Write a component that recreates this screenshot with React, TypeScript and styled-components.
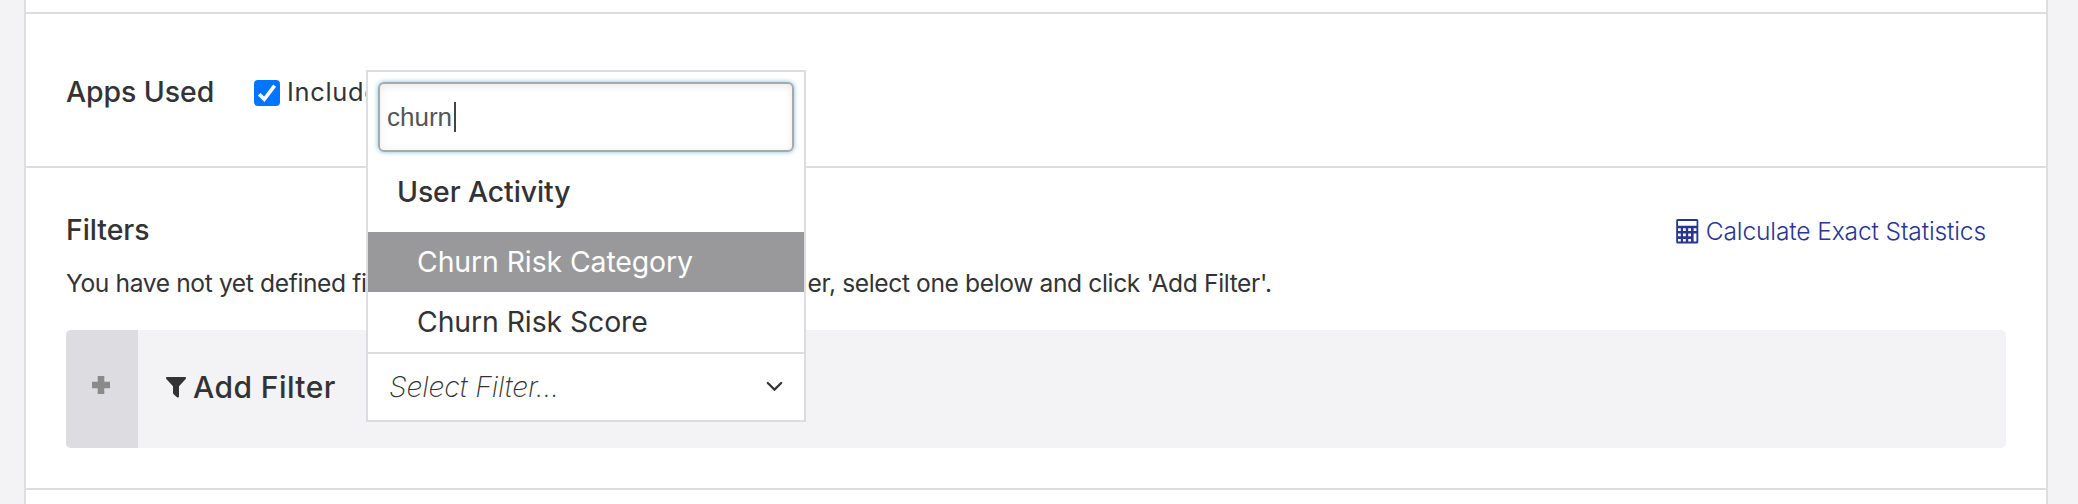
import React from 'react';
import styled, { createGlobalStyle, css } from 'styled-components';

const color = {
  page: '#f3f3f5',
  line: '#dddce1',
  text: '#333335',
  link: '#283593',
  active: '#99999b',
};

const GlobalStyle = createGlobalStyle`
  *, *::before, *::after { box-sizing: border-box; }
  html { overflow: hidden; }
  body {
    margin: 0;
    background: ${color.page};
    color: ${color.text};
    font-family: Inter, 'Liberation Sans', sans-serif;
  }
  svg { display: block; flex: none; }
`;

const Page = styled.main`
  height: 504px;
  padding: 0 30px 0 24px;
  overflow: hidden;
`;

const Panel = styled.div`
  display: flex;
  flex-direction: column;
  height: 100%;
  background: #fff;
  border: solid ${color.line};
  border-width: 0 2px;
`;

const PreviousSection = styled.section`
  flex: none;
  height: 14px;
  border-bottom: 2px solid ${color.line};
`;

const AppsSection = styled.section`
  display: flex;
  flex: none;
  align-items: center;
  height: 154px;
  padding: 4px 40px 0;
  border-bottom: 2px solid ${color.line};
`;

const FiltersSection = styled.section`
  flex: none;
  height: 322px;
  padding: 42px 40px 0;
  border-bottom: 2px solid ${color.line};
`;

const SectionTitle = styled.h2`
  margin: 0;
  font-size: 28.4px;
  font-weight: 500;
  line-height: 40px;
  letter-spacing: -0.05px;
  white-space: nowrap;
`;

const AppsTitle = styled(SectionTitle)`
  width: 188px;
`;

const CheckLabel = styled.div`
  display: flex;
  align-items: center;
  gap: 7px;
  font-size: 25.4px;
  line-height: 36px;
  letter-spacing: 0.7px;
  white-space: nowrap;
`;

const Checkbox = styled.span`
  display: block;
  width: 26px;
  height: 26px;
  margin-top: 1px;
  border-radius: 4px;
  background: #0075ff;
`;

const FiltersHeader = styled.div`
  display: flex;
  align-items: center;
  justify-content: space-between;
  height: 40px;
  padding-right: 20px;
`;

const StatsLink = styled.a`
  display: flex;
  align-items: center;
  gap: 7px;
  padding-top: 2px;
  color: ${color.link};
  font-size: 24.6px;
  font-weight: 260;
  line-height: 36px;
  letter-spacing: -0.14px;
`;

const Help = styled.p`
  display: flex;
  margin: 14px 0 28px;
  font-size: 24.6px;
  line-height: 38px;
  letter-spacing: -0.38px;
  white-space: pre;
`;

const HelpMiddle = styled.span`
  width: 441px;
`;

const FilterBar = styled.div`
  display: flex;
  height: 118px;
  border-radius: 5px;
  background: ${color.page};
`;

const AddHandle = styled.div`
  display: flex;
  flex: none;
  justify-content: center;
  width: 72px;
  padding: 46px 2px 0 0;
  border-radius: 5px 0 0 5px;
  background: ${color.line};
`;

const AddLabel = styled.div`
  display: flex;
  flex: none;
  align-items: center;
  gap: 7px;
  width: 228px;
  padding: 0 0 4px 28px;
  font-size: 30px;
  font-weight: 500;
  letter-spacing: 0.42px;
  white-space: nowrap;
`;

const Select = styled.div`
  position: relative;
  display: flex;
  flex: none;
  align-items: center;
  justify-content: space-between;
  width: 440px;
  height: 70px;
  margin-top: 22px;
  padding: 0 21px 2px 21px;
  border: 2px solid ${color.line};
  background: #fff;
`;

const Placeholder = styled.span`
  font-size: 28.4px;
  font-style: italic;
  font-weight: 200;
  letter-spacing: -0.12px;
`;

const Menu = styled.div`
  position: absolute;
  bottom: calc(100% + 2px);
  left: -2px;
  width: 440px;
  height: 282px;
  border: solid ${color.line};
  border-width: 2px 2px 0;
  background: #fff;
`;

const SearchField = styled.div`
  display: flex;
  align-items: center;
  height: 70px;
  margin: 10px 10px 0;
  padding-left: 7px;
  border: 2px solid #a9a9ab;
  border-radius: 6px;
  box-shadow: 0 0 5px #7fbfdc, inset 0 2px 8px rgba(0, 0, 0, 0.09);
  color: #555;
  font-family: 'Liberation Sans', Arial, sans-serif;
  font-size: 26px;
`;

const Caret = styled.span`
  width: 2px;
  height: 30px;
  margin-left: 2px;
  background: #444;
`;

const GroupTitle = styled.div`
  height: 80px;
  padding-left: 29px;
  font-size: 28.4px;
  font-weight: 500;
  line-height: 79px;
  letter-spacing: -0.1px;
`;

const Option = styled.div<{ $active?: boolean }>`
  height: 60px;
  padding-left: 49px;
  font-size: 28.4px;
  line-height: 60px;
  letter-spacing: -0.09px;
  ${({ $active }) =>
    $active &&
    css`
      background: ${color.active};
      color: #fff;
    `}
`;

const CheckIcon = () => (
  <svg width="26" height="26" viewBox="0 0 26 26" fill="none">
    <path d="M5.2 14.2L10.3 19.3L20.6 5.6" stroke="#fff" strokeWidth="3.6" />
  </svg>
);

const CalculatorIcon = () => (
  <svg width="23" height="25" viewBox="0 0 23 25" fill={color.link}>
    <path
      fillRule="evenodd"
      d="M1.8 0H20.7Q22.3 0 22.3 1.6V22.9Q22.3 24.5 20.7 24.5H1.8Q.2 24.5 .2 22.9V1.6Q.2 0 1.8 0Z
      M2 2H20.6V6.8H2Z
      M2 9.3H4.8V12H2Z M7 9.3H9.8V12H7Z M12.2 9.3H15V12H12.2Z M17.6 9.3H20.4V12H17.6Z
      M2 14.5H4.8V17.2H2Z M7 14.5H9.8V17.2H7Z M12.2 14.5H15V17.2H12.2Z
      M2 19.9H4.8V22.6H2Z M7 19.9H9.8V22.6H7Z M12.2 19.9H15V22.6H12.2Z
      M17.6 14.5H20.4V22.6H17.6Z"
    />
  </svg>
);

const PlusIcon = () => (
  <svg width="18" height="18" viewBox="0 0 18 18" fill="#8a8a8b">
    <path d="M5.7 0H12.3V5.7H18V12.3H12.3V18H5.7V12.3H0V5.7H5.7Z" />
  </svg>
);

const FunnelIcon = () => (
  <svg width="20" height="21" viewBox="0 0 20 21" fill={color.text}>
    <path d="M.8 0H19.2Q20.6 .6 19.7 1.9L13 9.2V19.6Q12.7 21.1 11.3 20.4L7.6 17.2Q7 16.6 7 15.8V9.2L.3 1.9Q-.6 .6 .8 0Z" />
  </svg>
);

const ChevronIcon = () => (
  <svg width="17" height="11" viewBox="0 0 17 11" fill="none">
    <path d="M1.8 2L8.5 8.6L15.2 2" stroke={color.text} strokeWidth="2.2" strokeLinecap="round" />
  </svg>
);

export default function App() {
  return (
    <>
      <GlobalStyle />
      <Page>
        <Panel>
          <PreviousSection />
          <AppsSection>
            <AppsTitle>Apps Used</AppsTitle>
            <CheckLabel>
              <Checkbox>
                <CheckIcon />
              </Checkbox>
              Include
            </CheckLabel>
          </AppsSection>
          <FiltersSection>
            <FiltersHeader>
              <SectionTitle>Filters</SectionTitle>
              <StatsLink>
                <CalculatorIcon />
                Calculate Exact Statistics
              </StatsLink>
            </FiltersHeader>
            <Help>
              <span>You have not yet defined fi</span>
              <HelpMiddle>lters for this segment. To add a new filt</HelpMiddle>
              <span>er, select one below and click 'Add Filter'.</span>
            </Help>
            <FilterBar>
              <AddHandle>
                <PlusIcon />
              </AddHandle>
              <AddLabel>
                <FunnelIcon />
                Add Filter
              </AddLabel>
              <Select>
                <Placeholder>Select Filter...</Placeholder>
                <ChevronIcon />
                <Menu>
                  <SearchField>
                    churn
                    <Caret />
                  </SearchField>
                  <GroupTitle>User Activity</GroupTitle>
                  <Option $active>Churn Risk Category</Option>
                  <Option>Churn Risk Score</Option>
                </Menu>
              </Select>
            </FilterBar>
          </FiltersSection>
        </Panel>
      </Page>
    </>
  );
}
